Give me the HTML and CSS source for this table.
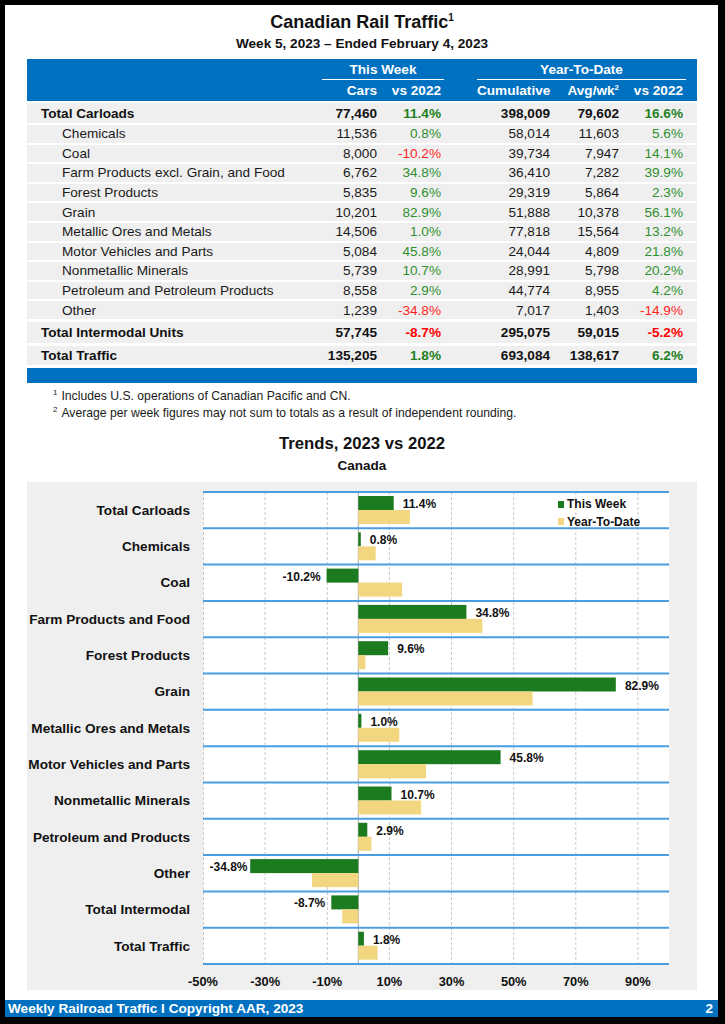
FILE: index.html
```html
<!DOCTYPE html>
<html>
<head>
<meta charset="utf-8">
<link rel="stylesheet" href="styles.css">
</head>
<body>
<div class="page">
  <div class="title">Canadian Rail Traffic<sup>1</sup></div>
  <div class="subtitle">Week 5, 2023 – Ended February 4, 2023</div>

  <div class="table">
    <div class="thead">
      <div class="trow hrow1">
        <div class="grp g1">This Week</div>
        <div class="grp g2">Year-To-Date</div>
      </div>
      <div class="trow hrow2">
        <div></div><div class="num">Cars</div><div class="num">vs 2022</div><div></div><div class="num">Cumulative</div><div class="num">Avg/wk<sup>2</sup></div><div class="num">vs 2022</div><div></div>
      </div>
    </div>

    <div class="trow row total first"><div class="lbl">Total Carloads</div><div class="num">77,460</div><div class="num pos">11.4%</div><div></div><div class="num">398,009</div><div class="num">79,602</div><div class="num pos">16.6%</div><div></div></div>
    <div class="trow row sub"><div class="lbl">Chemicals</div><div class="num">11,536</div><div class="num pos">0.8%</div><div></div><div class="num">58,014</div><div class="num">11,603</div><div class="num pos">5.6%</div><div></div></div>
    <div class="trow row sub"><div class="lbl">Coal</div><div class="num">8,000</div><div class="num neg">-10.2%</div><div></div><div class="num">39,734</div><div class="num">7,947</div><div class="num pos">14.1%</div><div></div></div>
    <div class="trow row sub"><div class="lbl">Farm Products excl. Grain, and Food</div><div class="num">6,762</div><div class="num pos">34.8%</div><div></div><div class="num">36,410</div><div class="num">7,282</div><div class="num pos">39.9%</div><div></div></div>
    <div class="trow row sub"><div class="lbl">Forest Products</div><div class="num">5,835</div><div class="num pos">9.6%</div><div></div><div class="num">29,319</div><div class="num">5,864</div><div class="num pos">2.3%</div><div></div></div>
    <div class="trow row sub"><div class="lbl">Grain</div><div class="num">10,201</div><div class="num pos">82.9%</div><div></div><div class="num">51,888</div><div class="num">10,378</div><div class="num pos">56.1%</div><div></div></div>
    <div class="trow row sub"><div class="lbl">Metallic Ores and Metals</div><div class="num">14,506</div><div class="num pos">1.0%</div><div></div><div class="num">77,818</div><div class="num">15,564</div><div class="num pos">13.2%</div><div></div></div>
    <div class="trow row sub"><div class="lbl">Motor Vehicles and Parts</div><div class="num">5,084</div><div class="num pos">45.8%</div><div></div><div class="num">24,044</div><div class="num">4,809</div><div class="num pos">21.8%</div><div></div></div>
    <div class="trow row sub"><div class="lbl">Nonmetallic Minerals</div><div class="num">5,739</div><div class="num pos">10.7%</div><div></div><div class="num">28,991</div><div class="num">5,798</div><div class="num pos">20.2%</div><div></div></div>
    <div class="trow row sub"><div class="lbl">Petroleum and Petroleum Products</div><div class="num">8,558</div><div class="num pos">2.9%</div><div></div><div class="num">44,774</div><div class="num">8,955</div><div class="num pos">4.2%</div><div></div></div>
    <div class="trow row sub"><div class="lbl">Other</div><div class="num">1,239</div><div class="num neg">-34.8%</div><div></div><div class="num">7,017</div><div class="num">1,403</div><div class="num neg">-14.9%</div><div></div></div>
    <div class="trow row total inter"><div class="lbl">Total Intermodal Units</div><div class="num">57,745</div><div class="num neg">-8.7%</div><div></div><div class="num">295,075</div><div class="num">59,015</div><div class="num neg">-5.2%</div><div></div></div>
    <div class="trow row total traffic"><div class="lbl">Total Traffic</div><div class="num">135,205</div><div class="num pos">1.8%</div><div></div><div class="num">693,084</div><div class="num">138,617</div><div class="num pos">6.2%</div><div></div></div>
    <div class="tfoot"></div>
  </div>

  <div class="notes">
    <div><sup>1</sup>Includes U.S. operations of Canadian Pacific and CN.</div>
    <div><sup>2</sup>Average per week figures may not sum to totals as a result of independent rounding.</div>
  </div>

  <div class="ctitle">Trends, 2023 vs 2022</div>
  <div class="csub">Canada</div>

  <div class="chart">
    <svg class="chart-svg" width="669" height="508" viewBox="27 482 669 508" xmlns="http://www.w3.org/2000/svg">
      <rect class="plot" x="203" y="492" width="466" height="472"/>
      <g class="grid">
        <line x1="203.5" y1="492" x2="203.5" y2="964"/>
        <line x1="265.1" y1="492" x2="265.1" y2="964"/>
        <line x1="327.3" y1="492" x2="327.3" y2="964"/>
        <line x1="389.4" y1="492" x2="389.4" y2="964"/>
        <line x1="451.5" y1="492" x2="451.5" y2="964"/>
        <line x1="513.7" y1="492" x2="513.7" y2="964"/>
        <line x1="575.8" y1="492" x2="575.8" y2="964"/>
        <line x1="637.9" y1="492" x2="637.9" y2="964"/>
      </g>
      <line class="zero" x1="358.3" y1="492" x2="358.3" y2="964"/>
      <g class="hlines">
        <line x1="203" y1="492" x2="669" y2="492"/>
        <line x1="203" y1="528.3" x2="669" y2="528.3"/>
        <line x1="203" y1="564.6" x2="669" y2="564.6"/>
        <line x1="203" y1="600.9" x2="669" y2="600.9"/>
        <line x1="203" y1="637.2" x2="669" y2="637.2"/>
        <line x1="203" y1="673.5" x2="669" y2="673.5"/>
        <line x1="203" y1="709.8" x2="669" y2="709.8"/>
        <line x1="203" y1="746.2" x2="669" y2="746.2"/>
        <line x1="203" y1="782.5" x2="669" y2="782.5"/>
        <line x1="203" y1="818.8" x2="669" y2="818.8"/>
        <line x1="203" y1="855.1" x2="669" y2="855.1"/>
        <line x1="203" y1="891.4" x2="669" y2="891.4"/>
        <line x1="203" y1="927.7" x2="669" y2="927.7"/>
        <line x1="203" y1="964" x2="669" y2="964"/>
      </g>
      <g class="wk">
        <rect x="358.3" y="496" width="35.4" height="14"/>
        <rect x="358.3" y="532.3" width="2.5" height="14"/>
        <rect x="326.6" y="568.6" width="31.7" height="14"/>
        <rect x="358.3" y="604.9" width="108.1" height="14"/>
        <rect x="358.3" y="641.2" width="29.8" height="14"/>
        <rect x="358.3" y="677.5" width="257.5" height="14"/>
        <rect x="358.3" y="713.8" width="3.1" height="14"/>
        <rect x="358.3" y="750.2" width="142.3" height="14"/>
        <rect x="358.3" y="786.5" width="33.2" height="14"/>
        <rect x="358.3" y="822.8" width="9.0" height="14"/>
        <rect x="250.2" y="859.1" width="108.1" height="14"/>
        <rect x="331.3" y="895.4" width="27.0" height="14"/>
        <rect x="358.3" y="931.7" width="5.6" height="14"/>
      </g>
      <g class="ytd">
        <rect x="358.3" y="510" width="51.6" height="14"/>
        <rect x="358.3" y="546.3" width="17.4" height="14"/>
        <rect x="358.3" y="582.6" width="43.8" height="14"/>
        <rect x="358.3" y="618.9" width="124.0" height="14"/>
        <rect x="358.3" y="655.2" width="7.1" height="14"/>
        <rect x="358.3" y="691.5" width="174.3" height="14"/>
        <rect x="358.3" y="727.8" width="41.0" height="14"/>
        <rect x="358.3" y="764.2" width="67.7" height="14"/>
        <rect x="358.3" y="800.5" width="62.8" height="14"/>
        <rect x="358.3" y="836.8" width="13.1" height="14"/>
        <rect x="312.0" y="873.1" width="46.3" height="14"/>
        <rect x="342.2" y="909.4" width="16.2" height="14"/>
        <rect x="358.3" y="945.7" width="19.3" height="14"/>
      </g>
      <g class="vals">
        <text x="402.7" y="508">11.4%</text>
        <text x="369.8" y="544.3">0.8%</text>
        <text class="end" x="320.6" y="580.6">-10.2%</text>
        <text x="475.4" y="616.9">34.8%</text>
        <text x="397.2" y="653.2">9.6%</text>
        <text x="624.9" y="689.5">82.9%</text>
        <text x="370.4" y="725.8">1.0%</text>
        <text x="509.6" y="762.2">45.8%</text>
        <text x="400.6" y="798.5">10.7%</text>
        <text x="376.3" y="834.8">2.9%</text>
        <text class="end" x="247.5" y="871.1">-34.8%</text>
        <text class="end" x="325.3" y="907.4">-8.7%</text>
        <text x="372.9" y="943.7">1.8%</text>
      </g>
      <g class="cats">
        <text x="190" y="514.8">Total Carloads</text>
        <text x="190" y="551.1">Chemicals</text>
        <text x="190" y="587.4">Coal</text>
        <text x="190" y="623.7">Farm Products and Food</text>
        <text x="190" y="660.0">Forest Products</text>
        <text x="190" y="696.3">Grain</text>
        <text x="190" y="732.6">Metallic Ores and Metals</text>
        <text x="190" y="769.0">Motor Vehicles and Parts</text>
        <text x="190" y="805.3">Nonmetallic Minerals</text>
        <text x="190" y="841.6">Petroleum and Products</text>
        <text x="190" y="877.9">Other</text>
        <text x="190" y="914.2">Total Intermodal</text>
        <text x="190" y="950.5">Total Traffic</text>
      </g>
      <g class="axis">
        <text x="203" y="985.5">-50%</text>
        <text x="265.1" y="985.5">-30%</text>
        <text x="327.3" y="985.5">-10%</text>
        <text x="389.4" y="985.5">10%</text>
        <text x="451.5" y="985.5">30%</text>
        <text x="513.7" y="985.5">50%</text>
        <text x="575.8" y="985.5">70%</text>
        <text x="637.9" y="985.5">90%</text>
      </g>
      <g class="legend">
        <rect class="lg-wk" x="558" y="501" width="6" height="7"/>
        <text x="567" y="508">This Week</text>
        <rect class="lg-ytd" x="558" y="518" width="6" height="7"/>
        <text x="567" y="525.5">Year-To-Date</text>
      </g>
    </svg>
  </div>

  <div class="footer">
    <span>Weekly Railroad Traffic I Copyright AAR, 2023</span>
    <span>2</span>
  </div>
</div>
</body>
</html>
```

FILE: styles.css
```css
* { box-sizing: border-box; }
html, body { margin: 0; padding: 0; background: #000; }
body {
  font-family: "Liberation Sans", Arial, sans-serif;
  color: #111;
  width: 725px;
  height: 1024px;
  overflow: hidden;
}
.page {
  width: 713px;
  height: 1012px;
  margin: 5px 0 0 5px;
  background: #fff;
  display: flex;
  flex-direction: column;
  padding: 6px 21px 0 22px;
}
.title {
  text-align: center;
  font-weight: bold;
  font-size: 18px;
  line-height: 22px;
}
.title sup {
  font-size: 10px;
  line-height: 0;
  vertical-align: 7px;
}
.subtitle {
  text-align: center;
  font-weight: bold;
  font-size: 13.6px;
  line-height: 18px;
  margin-top: 2px;
  margin-bottom: 6px;
}

/* table */
.trow {
  display: grid;
  grid-template-columns: 295px 58px 64px 33px 76px 69px 64px 11px;
  align-items: center;
  font-size: 13.6px;
}
.thead {
  background: #0070c0;
  color: #fff;
  font-weight: bold;
  height: 42px;
}
.hrow1 { height: 21px; }
.hrow2 { height: 21px; }
.grp {
  text-align: center;
  border-bottom: 1px solid #fff;
  height: 21px;
  line-height: 21px;
}
.g1 { grid-column: 2 / 4; grid-row: 1; }
.g2 { grid-column: 5 / 8; grid-row: 1; }
.num {
  text-align: right;
  padding-right: 3px;
  white-space: nowrap;
}
.thead sup {
  font-size: 8px;
  line-height: 0;
  vertical-align: 5px;
}
.row {
  background: #efefef;
  margin-top: 2px;
  height: 17.6px;
  color: #1a1a1a;
}
.lbl {
  padding-left: 14px;
  white-space: nowrap;
}
.sub .lbl { padding-left: 35px; }
.total { font-weight: bold; color: #111; }
.first { height: 20px; }
.inter { margin-top: 3px; height: 21px; }
.traffic { margin-top: 3px; height: 19px; }
.pos { color: #2f8f2f; }
.neg { color: #ff1f1f; }
.total .pos { color: #1f7f1f; }
.total .neg { color: #ff0000; }
.tfoot {
  margin-top: 3px;
  height: 15px;
  background: #0070c0;
}

/* notes */
.notes {
  padding: 5px 0 0 26px;
  font-size: 12.2px;
  line-height: 17px;
  color: #1a1a1a;
}
.notes sup {
  font-size: 8px;
  line-height: 0;
  vertical-align: 5px;
  margin-right: 4px;
}

/* chart */
.ctitle {
  text-align: center;
  font-weight: bold;
  font-size: 16.7px;
  line-height: 22px;
  margin-top: 11px;
}
.csub {
  text-align: center;
  font-weight: bold;
  font-size: 13.5px;
  line-height: 16px;
  margin-top: 3px;
}
.chart {
  margin-top: 8px;
  height: 508px;
  background: #efefef;
}
.chart-svg { display: block; }
.plot { fill: #fff; }
.grid line {
  stroke: #c9c9c9;
  stroke-width: 1;
  stroke-dasharray: 3 2;
}
.zero { stroke: #a6a6a6; stroke-width: 1; }
.hlines line { stroke: #4a9ee0; stroke-width: 2; }
.wk rect, .lg-wk { fill: #1c7a1f; }
.ytd rect, .lg-ytd { fill: #f3d780; }
.vals text {
  font-family: "Liberation Sans", Arial, sans-serif;
  font-weight: bold;
  font-size: 12px;
  fill: #111;
}
.vals text.end { text-anchor: end; }
.cats text {
  font-family: "Liberation Sans", Arial, sans-serif;
  font-weight: bold;
  font-size: 13.6px;
  fill: #111;
  text-anchor: end;
}
.axis text {
  font-family: "Liberation Sans", Arial, sans-serif;
  font-weight: bold;
  font-size: 12.8px;
  fill: #111;
  text-anchor: middle;
}
.legend text {
  font-family: "Liberation Sans", Arial, sans-serif;
  font-weight: bold;
  font-size: 12px;
  fill: #111;
}

/* footer */
.footer {
  margin: auto -21px 0 -22px;
  height: 17px;
  background: #0070c0;
  color: #fff;
  font-weight: bold;
  font-size: 13.6px;
  line-height: 17px;
  display: flex;
  justify-content: space-between;
  padding: 0 5px 0 3px;
}
```
